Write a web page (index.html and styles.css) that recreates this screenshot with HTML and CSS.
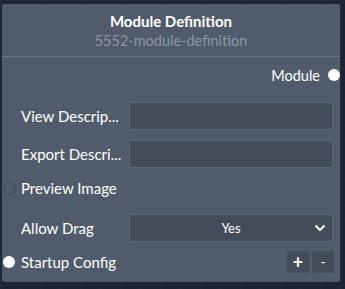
FILE: index.html
```html
<!DOCTYPE html>
<html lang="en">
<head>
    <meta charset="UTF-8">
    <title>Module Definition</title>
    <link rel="stylesheet" href="styles.css">
</head>
<body>
    <div class="node">
        <div class="node-header">
            <div class="node-title">Module Definition</div>
            <div class="node-id">5552-module-definition</div>
        </div>
        <div class="node-body">
            <div class="output-row">
                <span>Module</span>
                <span class="handle filled"></span>
            </div>
            <div class="field-row">
                <label>View Descrip...</label>
                <input type="text" class="field-input">
            </div>
            <div class="field-row">
                <label>Export Descri...</label>
                <input type="text" class="field-input">
            </div>
            <div class="input-row">
                <span class="handle hollow"></span>
                <span>Preview Image</span>
            </div>
            <div class="field-row">
                <label>Allow Drag</label>
                <div class="field-select">
                    <span>Yes</span>
                    <svg class="chevron" width="12" height="8" viewBox="0 0 12 8">
                        <path d="M1.5 1.5 L6 6 L10.5 1.5" fill="none" stroke="#fff" stroke-width="2"/>
                    </svg>
                </div>
            </div>
            <div class="input-row config-row">
                <span class="handle filled"></span>
                <span>Startup Config</span>
                <div class="btn-group">
                    <button class="small-btn plus">+</button>
                    <button class="small-btn">-</button>
                </div>
            </div>
        </div>
    </div>
</body>
</html>
```

FILE: styles.css
```css
body {
    margin: 0;
    padding: 4px 0 0 2px;
    height: 289px;
    box-sizing: border-box;
    overflow: hidden;
    font-family: "Lato", "Open Sans", sans-serif;
    background-color: #1c2433;
    background-image:
        linear-gradient(to right, #222b3b 1px, transparent 1px),
        linear-gradient(to bottom, #222b3b 1px, transparent 1px);
    background-size: 20px 20px;
}

.node {
    width: 338px;
    height: 278px;
    background-color: #505c6b;
    border-radius: 3px;
    color: #ffffff;
    box-sizing: border-box;
}

.node-header {
    text-align: center;
    padding-top: 8px;
    height: 53px;
    box-sizing: border-box;
    border-bottom: 1px solid #6a7584;
}

.node-title {
    font-size: 15px;
    font-weight: bold;
    line-height: 19px;
}

.node-id {
    font-size: 14.5px;
    line-height: 19px;
    color: #8a96a6;
}

.node-body {
    padding-top: 8px;
}

.output-row {
    display: flex;
    justify-content: flex-end;
    align-items: center;
    gap: 8px;
    height: 20px;
    font-size: 14.5px;
    margin-bottom: 17px;
}

.handle {
    width: 12px;
    height: 12px;
    border-radius: 50%;
    box-sizing: border-box;
    flex-shrink: 0;
}

.handle.filled {
    background-color: #ffffff;
}

.handle.hollow {
    width: 13px;
    height: 13px;
    border: 1px solid #3e4957;
}

.field-row {
    display: flex;
    align-items: center;
    height: 28px;
    padding-left: 19px;
    margin-bottom: 10px;
}

.field-row label {
    width: 108px;
    font-size: 15px;
    white-space: nowrap;
}

.field-input,
.field-select {
    width: 204px;
    height: 28px;
    box-sizing: border-box;
    background-color: #434d5a;
    border: 1px solid #5b6777;
    border-radius: 1px;
    color: #ffffff;
    margin: 0;
}

.field-select {
    display: flex;
    align-items: center;
    justify-content: center;
    position: relative;
    font-size: 13px;
}

.chevron {
    position: absolute;
    right: 6px;
    top: 9px;
}

.input-row {
    display: flex;
    align-items: center;
    gap: 6px;
    padding-left: 1px;
    height: 20px;
    font-size: 15px;
    margin: 0 0 16px;
}

.input-row .hollow + span {
    margin-left: -1px;
}

.config-row {
    height: 22px;
    margin: -1px 0 0;
}

.btn-group {
    margin-left: auto;
    margin-right: 6px;
    display: flex;
    gap: 3px;
}

.small-btn {
    width: 22px;
    height: 22px;
    padding: 0;
    border: none;
    border-radius: 1px;
    background-color: #434d5a;
    color: #ffffff;
    font-family: "Lato", sans-serif;
    font-size: 14px;
    line-height: 22px;
    flex-shrink: 0;
}

.small-btn.plus {
    font-size: 18px;
    font-weight: bold;
}
```
